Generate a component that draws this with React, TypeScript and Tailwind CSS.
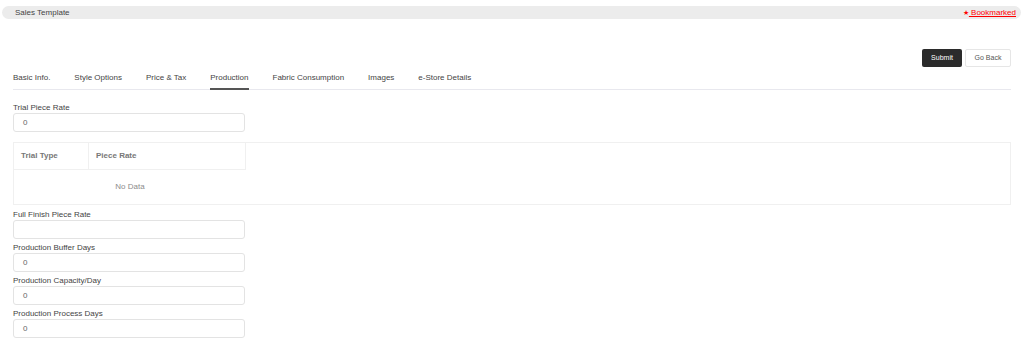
export default function App() {
  const tabs = ['Basic Info.', 'Style Options', 'Price & Tax', 'Production', 'Fabric Consumption', 'Images', 'e-Store Details'];
  const active = 'Production';

  return (
    <div className="min-h-screen bg-white font-['Liberation_Sans',Arial,sans-serif] text-[8px] leading-[10px] text-[#444]">
      {/* Top breadcrumb bar */}
      <div className="pt-[6px] pl-[2px] pr-[3px]">
        <div className="h-[13px] rounded-full bg-[#ececec] flex items-center justify-between pl-[13px] pr-[5px]">
          <span>Sales Template</span>
          <a href="#" className="text-[#ff0000]">
            <span className="text-[7px]">★</span>
            <span className="underline"> Bookmarked</span>
          </a>
        </div>
      </div>

      <div className="px-[13px]">
        {/* Actions */}
        <div className="flex justify-end gap-[3px] mt-[30px]">
          <button className="h-[18px] w-[40px] rounded-[2px] bg-[#2b2b2b] text-white text-[7px]">Submit</button>
          <button className="h-[18px] w-[46px] rounded-[2px] border border-[#e6e6e6] bg-white text-[#555] text-[7px]">Go Back</button>
        </div>

        {/* Tabs */}
        <div className="flex gap-[24px] border-b border-[#e8e8ee] h-[23px]">
          {tabs.map((t) => (
            <div key={t} className="relative flex items-center h-[22px] text-[#444]">
              {t}
              {t === active && <div className="absolute left-0 right-0 bottom-[-1px] h-[2px] bg-[#555]" />}
            </div>
          ))}
        </div>

        {/* Trial Piece Rate */}
        <div className="mt-[13px]">
          <Field label="Trial Piece Rate" value="0" />
        </div>

        {/* Trial table */}
        <div className="mt-[10px] h-[63px] border border-[#f0f0f0]">
          <div className="w-[232px]">
            <div className="flex h-[27px] border-b border-r border-[#f0f0f0] font-bold text-[#777]">
              <div className="w-[75px] border-r border-[#f0f0f0] flex items-center pl-[7px]">Trial Type</div>
              <div className="flex-1 flex items-center pl-[7px]">Piece Rate</div>
            </div>
            <div className="h-[34px] flex items-center justify-center text-[#8c8c8c]">No Data</div>
          </div>
        </div>

        {/* Other fields */}
        <div className="mt-[5px]">
          <Field label="Full Finish Piece Rate" value="" />
          <Field label="Production Buffer Days" value="0" />
          <Field label="Production Capacity/Day" value="0" />
          <Field label="Production Process Days" value="0" />
        </div>
      </div>
    </div>
  );
}

function Field({ label, value }: { label: string; value: string }) {
  return (
    <div className="mb-[4px]">
      <div className="h-[10px] leading-[10px]">{label}</div>
      <div className="w-[232px] h-[19px] border border-[#e3e3e3] rounded-[3px] flex items-center pl-[9px] text-[#666]">
        {value}
      </div>
    </div>
  );
}
